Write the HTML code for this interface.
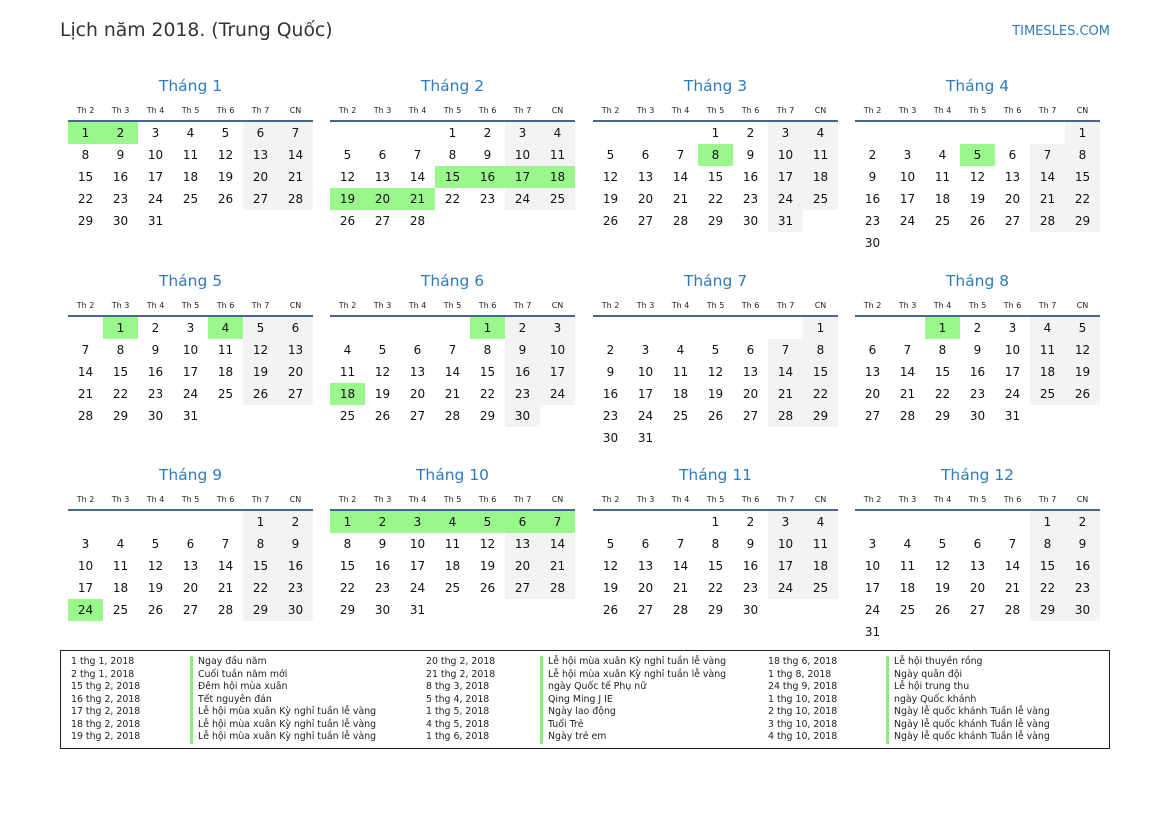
<!DOCTYPE html>
<html><head><meta charset="utf-8"><style>
body{margin:0;width:1169px;height:827px;background:#fff;position:relative;font-family:"DejaVu Sans","Liberation Sans",sans-serif;color:#111;overflow:hidden}
.h1{position:absolute;left:60px;top:20px;font-size:18.8px;color:#333}
.site{position:absolute;right:59px;top:24px;font-size:13px;color:#2f7bbf}
.m{position:absolute;width:245px}
.t{height:30px;line-height:30px;text-align:center;font-size:15.5px;color:#2f7bbf}
table{border-collapse:collapse;table-layout:fixed;width:245px}
td,th{width:35px;padding:0;text-align:center}
th{height:19px;font-size:8px;font-weight:normal;color:#222;border-bottom:2px solid #4a6690;vertical-align:middle}
td{height:22px;font-size:12px}
td.w{background:#f3f3f3}
td.h{background:#9af78c}
.leg{position:absolute;left:60px;top:650px;width:1048px;height:97px;border:1px solid #222;font-size:9.4px;color:#222}
.c{position:absolute;top:5px;line-height:12.5px}
.b{position:absolute;top:5px;line-height:12.5px}
.b div{border-left:3px solid #8eea80;padding-left:5px}
</style></head><body>
<div class="h1">Lịch năm 2018. (Trung Quốc)</div>
<div class="site">TIMESLES.COM</div>

<div class="m" style="left:68px;top:71px"><div class="t">Tháng 1</div><table><tr><th>Th 2</th><th>Th 3</th><th>Th 4</th><th>Th 5</th><th>Th 6</th><th>Th 7</th><th>CN</th></tr>
<tr><td class="h">1</td><td class="h">2</td><td>3</td><td>4</td><td>5</td><td class="w">6</td><td class="w">7</td></tr>
<tr><td>8</td><td>9</td><td>10</td><td>11</td><td>12</td><td class="w">13</td><td class="w">14</td></tr>
<tr><td>15</td><td>16</td><td>17</td><td>18</td><td>19</td><td class="w">20</td><td class="w">21</td></tr>
<tr><td>22</td><td>23</td><td>24</td><td>25</td><td>26</td><td class="w">27</td><td class="w">28</td></tr>
<tr><td>29</td><td>30</td><td>31</td><td></td><td></td><td></td><td></td></tr></table></div>

<div class="m" style="left:330px;top:71px"><div class="t">Tháng 2</div><table><tr><th>Th 2</th><th>Th 3</th><th>Th 4</th><th>Th 5</th><th>Th 6</th><th>Th 7</th><th>CN</th></tr>
<tr><td></td><td></td><td></td><td>1</td><td>2</td><td class="w">3</td><td class="w">4</td></tr>
<tr><td>5</td><td>6</td><td>7</td><td>8</td><td>9</td><td class="w">10</td><td class="w">11</td></tr>
<tr><td>12</td><td>13</td><td>14</td><td class="h">15</td><td class="h">16</td><td class="h">17</td><td class="h">18</td></tr>
<tr><td class="h">19</td><td class="h">20</td><td class="h">21</td><td>22</td><td>23</td><td class="w">24</td><td class="w">25</td></tr>
<tr><td>26</td><td>27</td><td>28</td><td></td><td></td><td></td><td></td></tr></table></div>

<div class="m" style="left:593px;top:71px"><div class="t">Tháng 3</div><table><tr><th>Th 2</th><th>Th 3</th><th>Th 4</th><th>Th 5</th><th>Th 6</th><th>Th 7</th><th>CN</th></tr>
<tr><td></td><td></td><td></td><td>1</td><td>2</td><td class="w">3</td><td class="w">4</td></tr>
<tr><td>5</td><td>6</td><td>7</td><td class="h">8</td><td>9</td><td class="w">10</td><td class="w">11</td></tr>
<tr><td>12</td><td>13</td><td>14</td><td>15</td><td>16</td><td class="w">17</td><td class="w">18</td></tr>
<tr><td>19</td><td>20</td><td>21</td><td>22</td><td>23</td><td class="w">24</td><td class="w">25</td></tr>
<tr><td>26</td><td>27</td><td>28</td><td>29</td><td>30</td><td class="w">31</td><td></td></tr></table></div>

<div class="m" style="left:855px;top:71px"><div class="t">Tháng 4</div><table><tr><th>Th 2</th><th>Th 3</th><th>Th 4</th><th>Th 5</th><th>Th 6</th><th>Th 7</th><th>CN</th></tr>
<tr><td></td><td></td><td></td><td></td><td></td><td></td><td class="w">1</td></tr>
<tr><td>2</td><td>3</td><td>4</td><td class="h">5</td><td>6</td><td class="w">7</td><td class="w">8</td></tr>
<tr><td>9</td><td>10</td><td>11</td><td>12</td><td>13</td><td class="w">14</td><td class="w">15</td></tr>
<tr><td>16</td><td>17</td><td>18</td><td>19</td><td>20</td><td class="w">21</td><td class="w">22</td></tr>
<tr><td>23</td><td>24</td><td>25</td><td>26</td><td>27</td><td class="w">28</td><td class="w">29</td></tr>
<tr><td>30</td><td></td><td></td><td></td><td></td><td></td><td></td></tr></table></div>

<div class="m" style="left:68px;top:266px"><div class="t">Tháng 5</div><table><tr><th>Th 2</th><th>Th 3</th><th>Th 4</th><th>Th 5</th><th>Th 6</th><th>Th 7</th><th>CN</th></tr>
<tr><td></td><td class="h">1</td><td>2</td><td>3</td><td class="h">4</td><td class="w">5</td><td class="w">6</td></tr>
<tr><td>7</td><td>8</td><td>9</td><td>10</td><td>11</td><td class="w">12</td><td class="w">13</td></tr>
<tr><td>14</td><td>15</td><td>16</td><td>17</td><td>18</td><td class="w">19</td><td class="w">20</td></tr>
<tr><td>21</td><td>22</td><td>23</td><td>24</td><td>25</td><td class="w">26</td><td class="w">27</td></tr>
<tr><td>28</td><td>29</td><td>30</td><td>31</td><td></td><td></td><td></td></tr></table></div>

<div class="m" style="left:330px;top:266px"><div class="t">Tháng 6</div><table><tr><th>Th 2</th><th>Th 3</th><th>Th 4</th><th>Th 5</th><th>Th 6</th><th>Th 7</th><th>CN</th></tr>
<tr><td></td><td></td><td></td><td></td><td class="h">1</td><td class="w">2</td><td class="w">3</td></tr>
<tr><td>4</td><td>5</td><td>6</td><td>7</td><td>8</td><td class="w">9</td><td class="w">10</td></tr>
<tr><td>11</td><td>12</td><td>13</td><td>14</td><td>15</td><td class="w">16</td><td class="w">17</td></tr>
<tr><td class="h">18</td><td>19</td><td>20</td><td>21</td><td>22</td><td class="w">23</td><td class="w">24</td></tr>
<tr><td>25</td><td>26</td><td>27</td><td>28</td><td>29</td><td class="w">30</td><td></td></tr></table></div>

<div class="m" style="left:593px;top:266px"><div class="t">Tháng 7</div><table><tr><th>Th 2</th><th>Th 3</th><th>Th 4</th><th>Th 5</th><th>Th 6</th><th>Th 7</th><th>CN</th></tr>
<tr><td></td><td></td><td></td><td></td><td></td><td></td><td class="w">1</td></tr>
<tr><td>2</td><td>3</td><td>4</td><td>5</td><td>6</td><td class="w">7</td><td class="w">8</td></tr>
<tr><td>9</td><td>10</td><td>11</td><td>12</td><td>13</td><td class="w">14</td><td class="w">15</td></tr>
<tr><td>16</td><td>17</td><td>18</td><td>19</td><td>20</td><td class="w">21</td><td class="w">22</td></tr>
<tr><td>23</td><td>24</td><td>25</td><td>26</td><td>27</td><td class="w">28</td><td class="w">29</td></tr>
<tr><td>30</td><td>31</td><td></td><td></td><td></td><td></td><td></td></tr></table></div>

<div class="m" style="left:855px;top:266px"><div class="t">Tháng 8</div><table><tr><th>Th 2</th><th>Th 3</th><th>Th 4</th><th>Th 5</th><th>Th 6</th><th>Th 7</th><th>CN</th></tr>
<tr><td></td><td></td><td class="h">1</td><td>2</td><td>3</td><td class="w">4</td><td class="w">5</td></tr>
<tr><td>6</td><td>7</td><td>8</td><td>9</td><td>10</td><td class="w">11</td><td class="w">12</td></tr>
<tr><td>13</td><td>14</td><td>15</td><td>16</td><td>17</td><td class="w">18</td><td class="w">19</td></tr>
<tr><td>20</td><td>21</td><td>22</td><td>23</td><td>24</td><td class="w">25</td><td class="w">26</td></tr>
<tr><td>27</td><td>28</td><td>29</td><td>30</td><td>31</td><td></td><td></td></tr></table></div>

<div class="m" style="left:68px;top:460px"><div class="t">Tháng 9</div><table><tr><th>Th 2</th><th>Th 3</th><th>Th 4</th><th>Th 5</th><th>Th 6</th><th>Th 7</th><th>CN</th></tr>
<tr><td></td><td></td><td></td><td></td><td></td><td class="w">1</td><td class="w">2</td></tr>
<tr><td>3</td><td>4</td><td>5</td><td>6</td><td>7</td><td class="w">8</td><td class="w">9</td></tr>
<tr><td>10</td><td>11</td><td>12</td><td>13</td><td>14</td><td class="w">15</td><td class="w">16</td></tr>
<tr><td>17</td><td>18</td><td>19</td><td>20</td><td>21</td><td class="w">22</td><td class="w">23</td></tr>
<tr><td class="h">24</td><td>25</td><td>26</td><td>27</td><td>28</td><td class="w">29</td><td class="w">30</td></tr></table></div>

<div class="m" style="left:330px;top:460px"><div class="t">Tháng 10</div><table><tr><th>Th 2</th><th>Th 3</th><th>Th 4</th><th>Th 5</th><th>Th 6</th><th>Th 7</th><th>CN</th></tr>
<tr><td class="h">1</td><td class="h">2</td><td class="h">3</td><td class="h">4</td><td class="h">5</td><td class="h">6</td><td class="h">7</td></tr>
<tr><td>8</td><td>9</td><td>10</td><td>11</td><td>12</td><td class="w">13</td><td class="w">14</td></tr>
<tr><td>15</td><td>16</td><td>17</td><td>18</td><td>19</td><td class="w">20</td><td class="w">21</td></tr>
<tr><td>22</td><td>23</td><td>24</td><td>25</td><td>26</td><td class="w">27</td><td class="w">28</td></tr>
<tr><td>29</td><td>30</td><td>31</td><td></td><td></td><td></td><td></td></tr></table></div>

<div class="m" style="left:593px;top:460px"><div class="t">Tháng 11</div><table><tr><th>Th 2</th><th>Th 3</th><th>Th 4</th><th>Th 5</th><th>Th 6</th><th>Th 7</th><th>CN</th></tr>
<tr><td></td><td></td><td></td><td>1</td><td>2</td><td class="w">3</td><td class="w">4</td></tr>
<tr><td>5</td><td>6</td><td>7</td><td>8</td><td>9</td><td class="w">10</td><td class="w">11</td></tr>
<tr><td>12</td><td>13</td><td>14</td><td>15</td><td>16</td><td class="w">17</td><td class="w">18</td></tr>
<tr><td>19</td><td>20</td><td>21</td><td>22</td><td>23</td><td class="w">24</td><td class="w">25</td></tr>
<tr><td>26</td><td>27</td><td>28</td><td>29</td><td>30</td><td></td><td></td></tr></table></div>

<div class="m" style="left:855px;top:460px"><div class="t">Tháng 12</div><table><tr><th>Th 2</th><th>Th 3</th><th>Th 4</th><th>Th 5</th><th>Th 6</th><th>Th 7</th><th>CN</th></tr>
<tr><td></td><td></td><td></td><td></td><td></td><td class="w">1</td><td class="w">2</td></tr>
<tr><td>3</td><td>4</td><td>5</td><td>6</td><td>7</td><td class="w">8</td><td class="w">9</td></tr>
<tr><td>10</td><td>11</td><td>12</td><td>13</td><td>14</td><td class="w">15</td><td class="w">16</td></tr>
<tr><td>17</td><td>18</td><td>19</td><td>20</td><td>21</td><td class="w">22</td><td class="w">23</td></tr>
<tr><td>24</td><td>25</td><td>26</td><td>27</td><td>28</td><td class="w">29</td><td class="w">30</td></tr>
<tr><td>31</td><td></td><td></td><td></td><td></td><td></td><td></td></tr></table></div>

<div class="leg">
<div class="c" style="left:10px"><div>1 thg 1, 2018</div><div>2 thg 1, 2018</div><div>15 thg 2, 2018</div><div>16 thg 2, 2018</div><div>17 thg 2, 2018</div><div>18 thg 2, 2018</div><div>19 thg 2, 2018</div></div>
<div class="b" style="left:129px"><div>Ngay đầu năm</div><div>Cuối tuần năm mới</div><div>Đêm hội mùa xuân</div><div>Tết nguyên đán</div><div>Lễ hội mùa xuân Kỳ nghỉ tuần lễ vàng</div><div>Lễ hội mùa xuân Kỳ nghỉ tuần lễ vàng</div><div>Lễ hội mùa xuân Kỳ nghỉ tuần lễ vàng</div></div>
<div class="c" style="left:365px"><div>20 thg 2, 2018</div><div>21 thg 2, 2018</div><div>8 thg 3, 2018</div><div>5 thg 4, 2018</div><div>1 thg 5, 2018</div><div>4 thg 5, 2018</div><div>1 thg 6, 2018</div></div>
<div class="b" style="left:479px"><div>Lễ hội mùa xuân Kỳ nghỉ tuần lễ vàng</div><div>Lễ hội mùa xuân Kỳ nghỉ tuần lễ vàng</div><div>ngày Quốc tế Phụ nữ</div><div>Qing Ming J IE</div><div>Ngày lao động</div><div>Tuổi Trẻ</div><div>Ngày trẻ em</div></div>
<div class="c" style="left:707px"><div>18 thg 6, 2018</div><div>1 thg 8, 2018</div><div>24 thg 9, 2018</div><div>1 thg 10, 2018</div><div>2 thg 10, 2018</div><div>3 thg 10, 2018</div><div>4 thg 10, 2018</div></div>
<div class="b" style="left:825px"><div>Lễ hội thuyền rồng</div><div>Ngày quân đội</div><div>Lễ hội trung thu</div><div>ngày Quốc khánh</div><div>Ngày lễ quốc khánh Tuần lễ vàng</div><div>Ngày lễ quốc khánh Tuần lễ vàng</div><div>Ngày lễ quốc khánh Tuần lễ vàng</div></div>
</div>
</body></html>
